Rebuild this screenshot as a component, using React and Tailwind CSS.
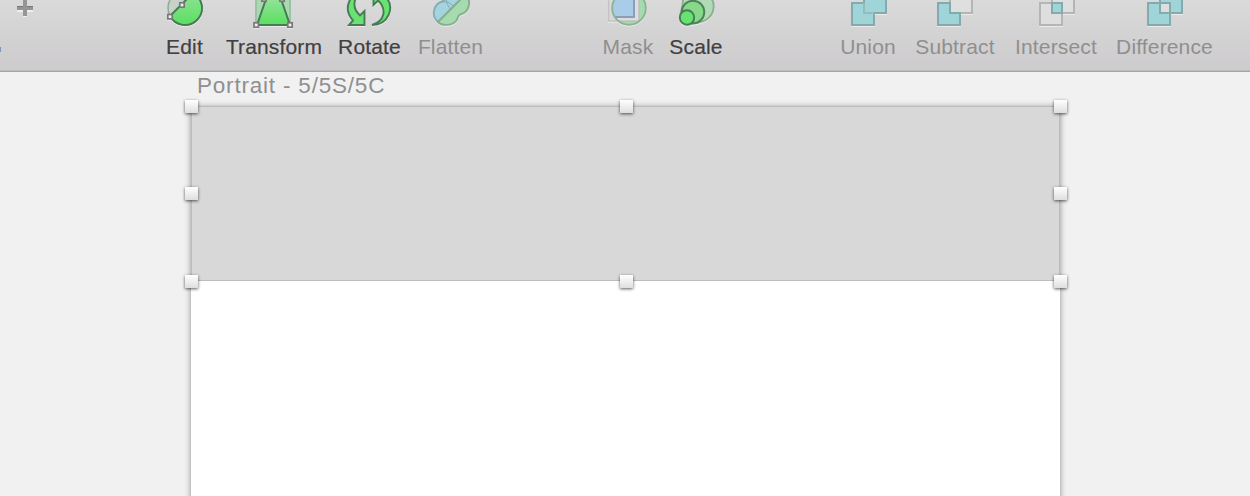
import React from "react";

function Grip({ x, y }) {
  return <rect x={x - 2.2} y={y - 2.2} width="4.4" height="4.4" fill="#efefef" stroke="#787878" strokeWidth="1.7" />;
}

function EditIcon() {
  return (
    <g>
      <circle cx="185" cy="8" r="17" fill="#c7d3c8" stroke="#8fac94" strokeWidth="1.6" />
      <path d="M170 16 L193 -7 A17 17 0 1 1 170 16Z" fill="url(#green)" stroke="#467b55" strokeWidth="1.9" />
      <Grip x={170} y={16.7} />
      <Grip x={182} y={5} />
    </g>
  );
}

function TransformIcon() {
  return (
    <g>
      <rect x="256" y="-10" width="34" height="35" fill="#abd8b2" stroke="#9bc5a2" strokeWidth="2" />
      <path d="M257 25 L266 -1 H281 L290 25Z" fill="url(#green)" stroke="#467b55" strokeWidth="2" />
      <Grip x={256.2} y={25} />
      <Grip x={290} y={25} />
      <Grip x={264} y={-1} />
      <Grip x={282} y={-1} />
    </g>
  );
}

const arrow = "M366 -9 C350 -9 342 8 353 20.5 L349 25 H364.5 V11 L360 15.5 C351 7 353 -5 366 -9Z";

function RotateIcon() {
  return (
    <g fill="#68e271" stroke="#467b55" strokeWidth="1.9">
      <path d={arrow} />
      <path d={arrow} transform="rotate(180 369 8)" />
    </g>
  );
}

function FlattenIcon() {
  return (
    <g strokeWidth="1.9">
      <path d="M438 22 A12 12 0 0 1 442 1.5 Q446 0 447 -5 L466 -6Z" fill="#a4d4df" stroke="#85adb3" />
      <path d="M442 2 Q449 1 453 6 M446 -3 Q446 4 450 9" fill="none" stroke="#85adb3" strokeWidth="1" />
      <path d="M438 22 C442 26 452 26 456 21 C459 18 456 15 463 13.5 C470 10 471 0 466 -6Z" fill="#a5dbae" stroke="#87ae90" />
    </g>
  );
}

function MaskIcon() {
  return (
    <g>
      <clipPath id="lens"><circle cx="629" cy="8" r="16.5" /></clipPath>
      <rect x="608.5" y="-10" width="30" height="31" fill="#d8d8d8" stroke="#c2c2c2" strokeWidth="1.5" />
      <circle cx="629" cy="8" r="16.5" fill="#a5dbae" />
      <g clipPath="url(#lens)">
        <rect x="608" y="-10" width="31" height="31" fill="#dddddf" stroke="#b5b5b5" />
        <rect x="604" y="-10" width="30" height="27" fill="#a9cde9" stroke="#899fb6" strokeWidth="2" />
      </g>
      <circle cx="629" cy="8" r="16.8" fill="none" stroke="#8bb494" strokeWidth="1.9" />
    </g>
  );
}

function ScaleIcon() {
  return (
    <g strokeWidth="1.9">
      <path d="M680 16 Q683 4 683 0 A16 16 0 1 1 706 20 Q700 23 688 24.5Z" fill="#b1dbb4" stroke="#8fae94" />
      <circle cx="693" cy="12" r="11.3" fill="#85d989" stroke="#4f8259" />
      <circle cx="687" cy="17.5" r="7.2" fill="#68e270" stroke="#467b55" />
    </g>
  );
}

function UnionIcon() {
  return (
    <g strokeWidth="2">
      <path d="M864 3 H852 V25 H874 V13 H886 V-9 H864Z" fill="#9fd5d9" stroke="#85aaae" />
      <path d="M864 3 V13 H874" fill="none" stroke="#97babd" />
    </g>
  );
}

function SubtractIcon() {
  return (
    <g strokeWidth="2">
      <rect x="950" y="-9" width="22" height="22" fill="#dfdfdf" stroke="#b5b5b5" />
      <path d="M950 3 H938 V25 H960 V13 H950Z" fill="#9fd5d9" stroke="#85aaae" />
    </g>
  );
}

function IntersectIcon() {
  return (
    <g strokeWidth="2">
      <rect x="1052" y="-9" width="22" height="22" fill="#dfdfdf" stroke="#b5b5b5" />
      <rect x="1040" y="3" width="22" height="22" fill="#dedede" stroke="#b5b5b5" />
      <rect x="1052" y="3" width="10" height="10" fill="#9fd5d9" stroke="#85aaae" />
    </g>
  );
}

function DifferenceIcon() {
  return (
    <g fill="#9fd5d9" stroke="#85aaae" strokeWidth="2">
      <rect x="1160" y="-9" width="22" height="22" />
      <rect x="1148" y="3" width="22" height="22" />
      <rect x="1160" y="3" width="10" height="10" fill="#dedede" />
    </g>
  );
}

const tools = [
  { label: "Edit", box: "166 0 37 30", size: "w-[37px] ml-[132px]", Icon: EditIcon, on: true },
  { label: "Transform", box: "226 0 96 30", size: "w-[96px] ml-[23px]", Icon: TransformIcon, on: true },
  { label: "Rotate", box: "338 0 63 30", size: "w-[63px] ml-4", Icon: RotateIcon, on: true },
  { label: "Flatten", box: "418 0 65 30", size: "w-[65px] ml-[17px]", Icon: FlattenIcon },
  { label: "Mask", box: "602 0 52 30", size: "w-[52px] ml-[119px]", Icon: MaskIcon },
  { label: "Scale", box: "670 0 52 30", size: "w-[52px] ml-4", Icon: ScaleIcon, on: true },
  { label: "Union", box: "840 0 56 30", size: "w-[56px] ml-[118px]", Icon: UnionIcon },
  { label: "Subtract", box: "914 0 82 30", size: "w-[82px] ml-[18px]", Icon: SubtractIcon },
  { label: "Intersect", box: "1014 0 84 30", size: "w-[84px] ml-[18px]", Icon: IntersectIcon },
  { label: "Difference", box: "1116 0 97 30", size: "w-[97px] ml-[18px]", Icon: DifferenceIcon },
];

function Tool({ label, box, size, Icon, on }) {
  return (
    <div className={`flex shrink-0 flex-col items-center ${size}`}>
      <svg viewBox={box} className="h-[30px] w-full overflow-visible drop-shadow-[0_1px_0_rgba(255,255,255,0.5)]">
        <Icon />
      </svg>
      <span className={`mt-[5px] whitespace-nowrap text-[21px] leading-6 tracking-[0.15px] ${on ? "text-[#404040] [-webkit-text-stroke:0.2px]" : "text-[#8f8f8f]"}`}>
        {label}
      </span>
    </div>
  );
}

function Toolbar() {
  return (
    <header className="flex h-[72px] shrink-0 overflow-hidden border-b border-[#a5a5a5] bg-linear-to-b from-[#dadada] to-[#cdcbcd] shadow-[inset_0_-1px_0_#bdbdbd]">
      <span className="mt-[47px] h-[5px] w-px shrink-0 bg-[#7f96b8]" />
      <svg viewBox="1 0 33 30" className="h-[30px] w-[33px] shrink-0">
        <path d="M17 8h6v2h4v-2h6v4H17zM23 14h4v3h-4z" fill="#eee" />
        <path d="M23 0h4v6h6v4h-6v6h-4v-6h-6V6h6z" fill="#959595" />
        <path d="M17 6.5h6M27 6.5h6" stroke="#777" />
      </svg>
      {tools.map((tool) => <Tool key={tool.label} {...tool} />)}
    </header>
  );
}

const handles = [
  "-left-[7px] -top-[7px]", "left-[428px] -top-[7px]", "left-[862px] -top-[7px]",
  "-left-[7px] top-[80px]", "left-[862px] top-[80px]",
  "-left-[7px] top-[168px]", "left-[428px] top-[168px]", "left-[862px] top-[168px]",
];

export default function App() {
  return (
    <div className="flex h-[496px] w-[1250px] flex-col overflow-hidden bg-[#f1f1f1] font-['Liberation_Sans',Arial,sans-serif]">
      <svg className="absolute size-0">
        <defs>
          <linearGradient id="green" x1="0" y1="0" x2="0" y2="1">
            <stop offset="0" stopColor="#92e398" />
            <stop offset="1" stopColor="#59df60" />
          </linearGradient>
        </defs>
      </svg>
      <Toolbar />
      <main className="flex min-h-0 flex-1 flex-col pl-[191px]">
        <div className="h-[34px] shrink-0 whitespace-nowrap pl-[6px] text-[22.5px] leading-7 tracking-[0.8px] text-[#8f8f8f]">Portrait - 5/5S/5C</div>
        <section className="h-[420px] w-[869px] shrink-0 bg-white shadow-[0_1px_6px_rgba(0,0,0,0.42)]">
          <div className="relative h-[175px] border border-[#bcbcbc] bg-[#d8d8d8]">
            {handles.map((place) => (
              <span key={place} className={`absolute size-[13px] bg-linear-to-b from-white to-[#dedede] shadow-[0_1px_3px_rgba(0,0,0,0.65)] ${place}`} />
            ))}
          </div>
        </section>
      </main>
    </div>
  );
}
